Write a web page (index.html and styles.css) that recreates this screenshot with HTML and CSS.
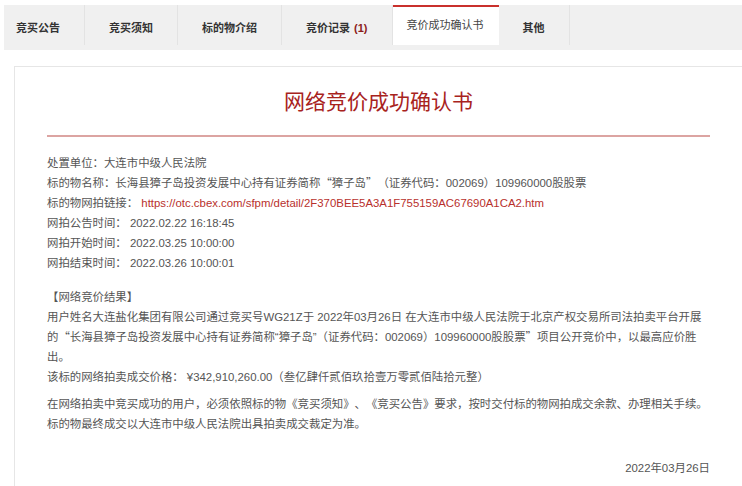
FILE: index.html
```html
<!DOCTYPE html>
<html lang="zh-CN">
  <head>
    <meta charset="UTF-8" />
    <meta name="viewport" content="width=device-width, initial-scale=1.0" />
    <title>竞价成功确认书</title>
    <link rel="stylesheet" href="styles.css">
  </head>
  <body>
    <!-- Tab bar -->
    <ul class="tabs">
      <li class="tab first">竞买公告</li>
      <li class="tab">竞买须知</li>
      <li class="tab">标的物介绍</li>
      <li class="tab">竞价记录 <b class="count">(1)</b></li>
      <li class="tab active">竞价成功确认书</li>
      <li class="tab">其他</li>
    </ul>

    <div class="panel">
      <h1 class="title">网络竞价成功确认书</h1>

      <div class="info">
        <p>处置单位：大连市中级人民法院</p>
        <p>标的物名称：长海县獐子岛投资发展中心持有证券简称<span class="fw">“</span>獐子岛<span class="fw">”</span>（证券代码：002069）109960000股股票</p>
        <p>标的物网拍链接： <a href="#">https://otc.cbex.com/sfpm/detail/2F370BEE5A3A1F755159AC67690A1CA2.htm</a></p>
        <p>网拍公告时间： 2022.02.22 16:18:45</p>
        <p>网拍开始时间： 2022.03.25 10:00:00</p>
        <p>网拍结束时间： 2022.03.26 10:00:01</p>
      </div>

      <div class="result">
        <p>【网络竞价结果】</p>
        <p>用户姓名大连盐化集团有限公司通过竞买号WG21Z于 2022年03月26日 在大连市中级人民法院于北京产权交易所司法拍卖平台开展的<span class="fw">“</span>长海县獐子岛投资发展中心持有证券简称“獐子岛”（证券代码：002069）109960000股股票<span class="fw">”</span>项目公开竞价中，以最高应价胜出。</p>
        <p>该标的网络拍卖成交价格： ¥342,910,260.00（叁亿肆仟贰佰玖拾壹万零贰佰陆拾元整）</p>
      </div>

      <div class="notice">
        <p>在网络拍卖中竞买成功的用户，必须依照标的物《竞买须知》、《竞买公告》要求，按时交付标的物网拍成交余款、办理相关手续。</p>
        <p>标的物最终成交以大连市中级人民法院出具拍卖成交裁定为准。</p>
      </div>

      <p class="date">2022年03月26日</p>
    </div>
  </body>
</html>
```

FILE: styles.css
```css
body {
  margin: 0;
  overflow: hidden;
  font-family: "Liberation Sans", "Noto Sans CJK SC", sans-serif;
  color: #555;
  background: #fff;
  text-spacing-trim: space-all;
}
p {
  margin: 0;
}
.tabs {
  display: flex;
  align-items: flex-start;
  list-style: none;
  margin: 5px 0 0 4px;
  padding: 0;
  height: 45px;
  background: #f0f0f0;
}
.tab {
  box-sizing: border-box;
  height: 40px;
  padding: 6px 24px 0 24px;
  line-height: 34px;
  font-size: 11px;
  font-weight: 600;
  color: #333;
  border-right: 1px solid #e3e3e3;
  white-space: nowrap;
}
.tab.first {
  padding-left: 12px;
}
.count {
  margin-left: 1px;
  color: #8c1c1c;
}
.tab.active {
  padding: 0 15px 0 14px;
  line-height: 36px;
  font-weight: normal;
  color: #444;
  background: #fff;
  border-top: 2px solid #c9302c;
  border-right: none;
}
.panel {
  box-sizing: border-box;
  width: 729px;
  margin: 16px 0 0 14px;
  padding: 20px 32px 40px;
  border: 1px solid #e6e6e6;
  font-size: 11.4px;
  line-height: 20px;
}
.title {
  margin: 0;
  padding-bottom: 18px;
  border-bottom: 2px solid #dca4a2;
  text-align: center;
  font-size: 21px;
  line-height: 30px;
  font-weight: normal;
  color: #a8231d;
}
.info {
  margin-top: 16px;
}
.info a {
  color: #b8302c;
  text-decoration: none;
}
/* full-width CJK quotation marks */
.fw {
  font-family: "Noto Sans CJK SC", sans-serif;
  font-variant-east-asian: full-width;
  line-height: 1;
}
.result {
  margin-top: 14px;
}
.notice {
  margin-top: 7px;
}
.date {
  margin-top: 24px;
  text-align: right;
}
```
